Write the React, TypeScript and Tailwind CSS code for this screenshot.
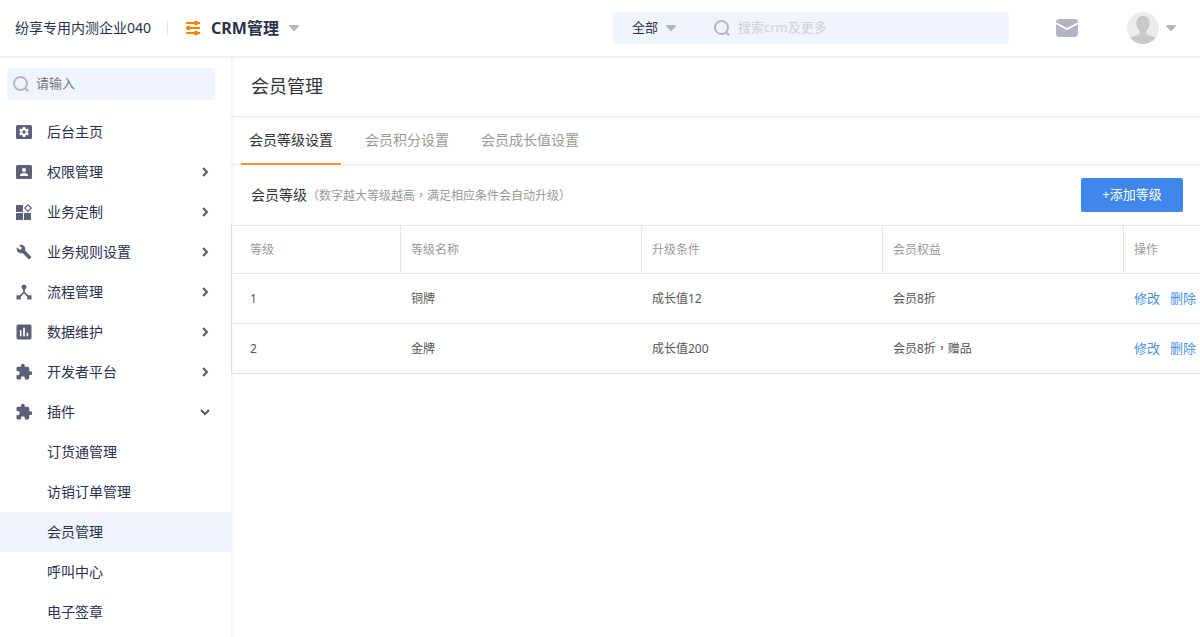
import { FC, ReactNode } from 'react';
import { MdAssessment, MdBuild, MdDeviceHub, MdExtension } from 'react-icons/md';

const SettingsIcon: FC = () => (
  <svg width="16" height="14" viewBox="0 0 16 14" fill="currentColor">
    <rect width="16" height="14" rx="1.5" />
    <g stroke="#fff" strokeWidth="2.4">
      <path d="M8 2v10M3.670 4.500l8.660 5M12.330 4.500l-8.660 5" />
    </g>
    <circle cx="8" cy="7" r="3.8" fill="#fff" />
    <circle cx="8" cy="7" r="1.7" />
  </svg>
);

const ContactIcon: FC = () => (
  <svg width="16" height="14" viewBox="0 0 16 14" fill="currentColor">
    <rect width="16" height="14" rx="1.5" />
    <circle cx="8" cy="5" r="2.1" fill="#fff" />
    <path d="M4 11V10C4 8.7 6.4 8 8 8s4 .7 4 2v1z" fill="#fff" />
  </svg>
);

const WidgetIcon: FC = () => (
  <svg width="16" height="16" viewBox="0 0 16 16" fill="currentColor">
    <rect y="1" width="7" height="7" rx=".5" />
    <rect y="9" width="7" height="7" rx=".5" />
    <rect x="8" y="9" width="7" height="7" rx=".5" />
    <path d="M12 .9 15.2 4.1 12 7.3 8.8 4.1z" fill="none" stroke="currentColor" strokeWidth="1.2" />
  </svg>
);

const Caret: FC = () => (
  <svg width="10" height="6" viewBox="0 0 10 6" fill="#b3b6c2">
    <path d="M1 0h8c.9 0 1.2.9.6 1.5L6 5.4c-.6.7-1.4.7-2 0L.4 1.500C-.2.9.1 0 1 0z" />
  </svg>
);

const SearchIcon: FC = () => (
  <svg width="16" height="16" viewBox="0 0 16 16" fill="none" stroke="#b3b6c2" strokeWidth="2">
    <circle cx="7.500" cy="7.500" r="6.500" />
    <path d="m11.800 11.800 3.400 3.400" />
  </svg>
);

const Chevron: FC<{ open?: boolean }> = ({ open }) => (
  <svg width="12" height="12" viewBox="0 0 12 12" fill="none" stroke="#545871" strokeWidth="2" className={open ? 'rotate-90' : ''}>
    <path d="m4 2 4 4-4 4" />
  </svg>
);

type MenuItem = { label: string; icon: ReactNode; arrow?: boolean; open?: boolean };

const menu: MenuItem[] = [
  { label: '后台主页', icon: <SettingsIcon /> },
  { label: '权限管理', icon: <ContactIcon />, arrow: true },
  { label: '业务定制', icon: <WidgetIcon />, arrow: true },
  { label: '业务规则设置', icon: <MdBuild size={16} />, arrow: true },
  { label: '流程管理', icon: <MdDeviceHub size={20} />, arrow: true },
  { label: '数据维护', icon: <MdAssessment size={20} />, arrow: true },
  { label: '开发者平台', icon: <MdExtension size={18} />, arrow: true },
  { label: '插件', icon: <MdExtension size={18} />, arrow: true, open: true },
];

const plugins = ['订货通管理', '访销订单管理', '会员管理', '呼叫中心', '电子签章'];

const tabs = ['会员等级设置', '会员积分设置', '会员成长值设置'];

const levels = [
  { level: 1, name: '铜牌', condition: '成长值12', benefit: '会员8折' },
  { level: 2, name: '金牌', condition: '成长值200', benefit: '会员8折，赠品' },
];

const Header: FC = () => (
  <header className="relative z-20 flex h-14 items-center bg-white shadow-[0_1px_3px_rgba(0,0,0,0.1)]">
    <div className="flex flex-1 items-center pl-[15px]">
      <span className="text-sm">纷享专用内测企业040</span>
      <span className="ml-4 h-4 w-px bg-[#e4e6ee]" />
      <button className="ml-[17px] flex items-center">
        <svg width="16" height="16" viewBox="0 0 16 16" fill="#ff8000">
          <path d="M1 2h14v2H1zM1 7h14v2H1zM1 12h14v2H1z" />
          <circle cx="11" cy="3" r="2.300" />
          <circle cx="3.500" cy="8" r="2.300" />
          <circle cx="11" cy="13" r="2.300" />
        </svg>
        <span className="mx-[10px] text-base font-bold">CRM管理</span>
        <Caret />
      </button>
    </div>
    <div className="flex h-8 w-[396px] items-center rounded bg-[#f0f4fc]">
      <button className="flex w-[101px] items-center gap-2 pl-[19px] text-[13px]">
        全部
        <Caret />
      </button>
      <SearchIcon />
      <input
        type="text"
        aria-label="搜索"
        placeholder="搜索crm及更多"
        className="ml-2 min-w-0 flex-1 bg-transparent text-[13px] outline-none placeholder:text-[#ced1d9]"
      />
    </div>
    <div className="flex w-[191px] items-center pl-[47px]">
      <button aria-label="消息">
        <svg width="22" height="18" viewBox="0 0 22 18" className="block">
          <rect width="22" height="18" rx="3.500" fill="#b3b6c2" />
          <path d="M0 4.200 11 10l11-5.800" fill="none" stroke="#fff" strokeWidth="1.800" />
        </svg>
      </button>
      <button aria-label="个人中心" className="ml-[49px] flex items-center gap-[7px]">
        <svg width="32" height="32" viewBox="0 0 32 32">
          <clipPath id="avatar">
            <circle cx="16" cy="16" r="16" />
          </clipPath>
          <g clipPath="url(#avatar)">
            <path fill="#ebebeb" d="M0 0h32v32H0z" />
            <path
              fill="#c9c9c9"
              d="M16 4c4.200 0 6.600 2.900 6.600 7 0 3.300-1.400 6.400-3.300 8.100v2c0 1.700 1.700 2 4.200 2.700 3.200.9 5.500 1.500 6.500 3.200V32H2v-5c1-1.700 3.300-2.300 6.500-3.200 2.500-.7 4.200-1 4.200-2.700v-2c-1.900-1.700-3.300-4.800-3.300-8.100 0-4.100 2.400-7 6.600-7z"
            />
          </g>
        </svg>
        <Caret />
      </button>
    </div>
  </header>
);

const SideBar: FC = () => (
  <aside className="relative z-10 w-[231px] shrink-0 pt-3 shadow-[1px_0_3px_rgba(0,0,0,0.07)]">
    <label className="ml-[7px] mr-4 flex h-8 items-center rounded-sm bg-[#f0f4fc] pl-[6px]">
      <SearchIcon />
      <input
        type="text"
        aria-label="搜索菜单"
        placeholder="请输入"
        className="ml-[7px] min-w-0 flex-1 bg-transparent text-[13px] outline-none placeholder:text-[#757575]"
      />
    </label>
    <nav className="mt-3 text-sm">
      {menu.map((item) => (
        <a key={item.label} href="#" className="flex h-10 items-center pl-[14px] pr-5">
          <span className="flex w-5 justify-center text-[#5b5f78]">{item.icon}</span>
          <span className="ml-[13px] flex-1">{item.label}</span>
          {item.arrow && <Chevron open={item.open} />}
        </a>
      ))}
      {plugins.map((label) => (
        <a key={label} href="#" className={`flex h-10 items-center pl-[47px] ${label === '会员管理' ? 'bg-[#f0f4fc]' : ''}`}>
          {label}
        </a>
      ))}
    </nav>
  </aside>
);

const LevelTable: FC = () => (
  <table className="w-full table-fixed border-separate border-spacing-0 border-l border-[#e3e6ef] text-left text-xs text-[#555]">
    <thead className="text-[#999]">
      <tr className="h-[49px]">
        <th className="w-[169px] border-y border-r border-[#e3e6ef] pl-[18px] font-normal">等级</th>
        <th className="border-y border-r border-[#e3e6ef] pl-[10px] font-normal">等级名称</th>
        <th className="border-y border-r border-[#e3e6ef] pl-[10px] font-normal">升级条件</th>
        <th className="border-y border-r border-[#e3e6ef] pl-[10px] font-normal">会员权益</th>
        <th className="w-[76px] border-y border-[#e3e6ef] pl-[10px] font-normal">操作</th>
      </tr>
    </thead>
    <tbody>
      {levels.map((row) => (
        <tr key={row.level} className="h-[50px]">
          <td className="border-b border-[#e3e6ef] pl-[18px]">{row.level}</td>
          <td className="border-b border-[#e3e6ef] pl-[10px]">{row.name}</td>
          <td className="border-b border-[#e3e6ef] pl-[10px]">{row.condition}</td>
          <td className="border-b border-[#e3e6ef] pl-[10px] font-['Noto_Sans','Noto_Sans_CJK_TC',sans-serif]">{row.benefit}</td>
          <td className="border-b border-[#e3e6ef] pl-[10px]">
            <div className="flex gap-[10px] whitespace-nowrap text-[13px] text-[#4a90ea]">
              <a href="#">修改</a>
              <a href="#">删除</a>
            </div>
          </td>
        </tr>
      ))}
    </tbody>
  </table>
);

export default function App() {
  return (
    <div className="flex min-h-screen flex-col bg-white font-['Noto_Sans','Noto_Sans_CJK_SC',sans-serif] text-[#2a304d]">
      <Header />
      <div className="flex flex-1">
        <SideBar />
        <main className="min-w-0 flex-1">
          <h1 className="flex h-[61px] items-center border-b border-[#ececec] pl-5 text-lg text-[#333]">会员管理</h1>
          <div role="tablist" className="flex h-12 gap-4 border-b border-[#ececec] pl-[10px] text-sm">
            {tabs.map((tab, i) => (
              <button
                key={tab}
                role="tab"
                aria-selected={i === 0}
                className={`h-12 border-b-2 px-2 ${i === 0 ? 'border-[#ff8f3d] text-[#333]' : 'border-transparent text-[#999]'}`}
              >
                {tab}
              </button>
            ))}
          </div>
          <div className="flex h-[60px] items-center justify-between pl-5 pr-[17px]">
            <h2 className="text-sm text-[#333]">
              会员等级
              <span className="font-['Noto_Sans','Noto_Sans_CJK_TC',sans-serif] text-xs text-[#999]">
                （数字越大等级越高，满足相应条件会自动升级）
              </span>
            </h2>
            <button className="h-[34px] w-[102px] rounded-xs bg-[#4086eb] text-[13px] text-white">+添加等级</button>
          </div>
          <LevelTable />
        </main>
      </div>
    </div>
  );
}
